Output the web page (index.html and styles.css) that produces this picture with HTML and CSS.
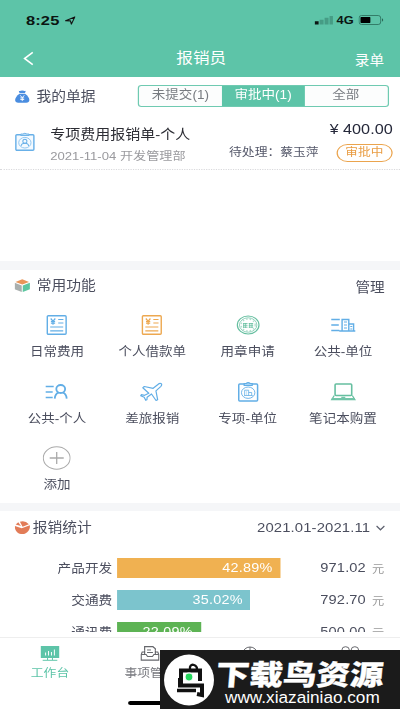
FILE: index.html
```html
<!DOCTYPE html>
<html lang="zh-CN">
<head>
<meta charset="utf-8">
<title>报销员</title>
<link rel="stylesheet" href="styles.css">
</head>
<body>
<div class="screen">
  <header class="head">
    <div class="status">
      <span class="time">8:25</span>
      <svg class="loc" viewBox="0 0 12 10" preserveAspectRatio="none"><path d="M1 5.2 10.6 1 7 9 6 5.4Z" fill="none" stroke="#111" stroke-width="1.2" stroke-linejoin="round"/></svg>
      <svg class="signal" viewBox="0 0 19 10" preserveAspectRatio="none"><path d="M0 6.5h4V10H0z" fill="#0b1512"/><path d="M5 5h4v5H5zM10 3h4v7h-4zM15 1h3.500v9H15z" fill="#469c85"/></svg>
      <span class="net">4G</span>
      <svg class="battery" viewBox="0 0 26 10" preserveAspectRatio="none"><rect x=".5" y=".5" width="22" height="9" rx="2.500" fill="none" stroke="#327c68"/><rect x="2" y="2" width="10" height="6" rx=".7" fill="#000"/><path d="M24 3.300q2 1.700 0 3.400z" fill="#1f4e41"/></svg>
    </div>
    <nav class="navbar">
      <svg class="back" viewBox="0 0 12 16" preserveAspectRatio="none"><path d="M10.500 1.500 1.500 8l9 6.500" fill="none" stroke="#fff" stroke-width="1.700"/></svg>
      <h1 class="t">报销员</h1>
      <a class="entry t">录单</a>
    </nav>
  </header>

  <section class="bills">
    <div class="bills-head">
      <svg class="sec-icon" viewBox="0 0 15 14" preserveAspectRatio="none"><path d="M4 .7q1.200.7 1.800.1 1.700-.8 3.400 0 .7.500 1.800-.1L10.200 3H4.800z" fill="#4a8de0"/><path d="M4.700 3.800h5.600C13 6 14.500 8.200 14.500 10.300c0 1.800-1.200 2.900-3 2.900h-8c-1.800 0-3-1.100-3-2.900C.5 8.200 2 6 4.700 3.800z" fill="#4a8de0"/><path d="m5.500 5.500 2 2.500 2-2.500M7.500 8v3.500M5.600 8.200h3.800M5.600 9.900h3.800" fill="none" stroke="#fff" stroke-width=".9"/></svg>
      <h2 class="t">我的单据</h2>
      <div class="segments"><span><em class="t">未提交(1)</em></span><span class="on"><em class="t">审批中(1)</em></span><span><em class="t">全部</em></span></div>
    </div>
    <div class="bill">
      <svg class="bill-icon" viewBox="0 0 20 20" preserveAspectRatio="none"><rect x="1.200" y="2.700" width="17.600" height="15.500" rx="1" fill="#f4faff" stroke="#68b0e8" stroke-width="1.400"/><path d="M6 3.500V2h2q2-1.500 4 0h2v1.500z" fill="#b9dcf6" stroke="#68b0e8" stroke-width=".9"/><ellipse cx="10" cy="10.700" rx="6" ry="5.300" fill="none" stroke="#8bc3ee" stroke-width=".9"/><circle cx="10" cy="9.300" r="2" fill="none" stroke="#68b0e8"/><path d="M6.300 14q.4-2.800 3.700-2.800t3.700 2.800" fill="none" stroke="#68b0e8"/></svg>
      <div class="bill-main">
        <div class="bill-line"><span class="bill-title t">专项费用报销单-个人</span><span class="amount t">¥ <b>400.00</b></span></div>
        <div class="bill-line sub"><span class="date t">2021-11-04 开发管理部</span><span class="pending t">待处理：蔡玉萍</span><span class="badge"><em class="t">审批中</em></span></div>
      </div>
    </div>
  </section>

  <section class="funcs">
    <div class="sec-head">
      <svg class="sec-icon" viewBox="0 0 15 14" preserveAspectRatio="none"><path d="M7.500.3 14.200 3 7.500 5.700.8 3z" fill="#e89558"/><path d="M0 4 7 6.700V13.500L0 10.700z" fill="#a9afae"/><path d="M15 4 8 6.700v6.800l7-2.800z" fill="#5cc6a0"/></svg>
      <h2 class="t">常用功能</h2><a class="manage t">管理</a>
    </div>
    <div class="grid">
      <div class="fn"><svg viewBox="0 0 28 24" preserveAspectRatio="none" class="blue"><rect x="4.600" y="2.700" width="18.800" height="18.600" rx="1" stroke-width="1.400"/><path d="m8 5.500 2.300 2.700 2.300-2.700M10.300 8v3.800M8.200 8.500h4.200M8.200 10.200h4.200M15.500 6.500h5.200M15.500 10h5.200M7.500 14h13M7.500 17.800h13" stroke-width="1.200"/></svg><span class="t">日常费用</span></div>
      <div class="fn"><svg viewBox="0 0 28 24" preserveAspectRatio="none" class="orange"><rect x="4.600" y="2.700" width="18.800" height="18.600" rx="1" stroke-width="1.400"/><path d="m8 5.500 2.300 2.700 2.300-2.700M10.300 8v3.800M8.200 8.500h4.200M8.200 10.200h4.200M15.500 6.500h5.200M15.500 10h5.200M7.500 14h13M7.500 17.800h13" stroke-width="1.200"/></svg><span class="t">个人借款单</span></div>
      <div class="fn"><svg viewBox="0 0 28 24" preserveAspectRatio="none" class="green"><ellipse cx="14" cy="12" rx="10.800" ry="9"/><ellipse cx="14" cy="12" rx="8.700" ry="7.200" stroke-width=".7"/><ellipse cx="14" cy="12" rx="7" ry="5.900" stroke-width="1.300" stroke-dasharray="1.500 2" opacity=".5"/><path d="M9 10.500h4.400M9 12.300h4.400M9 14.200h4.400M9.500 10v5M11.500 10v5M14.500 10.500H19M14.500 12.300H19M14.500 14.200H19M15.500 10v5M17.800 10v5" stroke-width=".8"/></svg><span class="t">用章申请</span></div>
      <div class="fn"><svg viewBox="0 0 28 24" preserveAspectRatio="none" class="blue"><path d="M2 6.500h8.500M2 12h7.500M2 17.500h8M10 18h16" stroke-width="1.700"/><path d="M12.800 18V6.500h6.700V18M19.500 11h4.800v7" stroke-width="1.400"/><path d="M14.700 9h3M14.700 12h3M14.700 15h3M21 13.500h2M21 16h2" stroke-width="1"/></svg><span class="t">公共-单位</span></div>
      <div class="fn"><svg viewBox="0 0 28 24" preserveAspectRatio="none" class="blue"><path d="M3 6.500h8M3 12h7M3 17.500h7" stroke-width="1.500"/><ellipse cx="18" cy="9" rx="4.400" ry="4" stroke-width="1.800"/><path d="M12 18.700q.5-5.200 4-6M24 18.700q-.5-5.200-4-6" stroke-width="1.800"/></svg><span class="t">公共-个人</span></div>
      <div class="fn"><svg viewBox="0 0 28 24" preserveAspectRatio="none" class="blue"><path d="m11 13.300-4.200 2-3.300-.6-.6 1 3.500 1.600 1.500 3 1.200-.5.200-2.500 4.400-3.300 4.500 6.500 1.600-.8-1.700-8.800 4.700-4.300c1.200-1.200 1.300-2.400.7-2.800s-2.600 0-3.700.9l-4.500 3.600-8.800-1.800-1.500 1.200z" stroke-linejoin="round" stroke-width="1.200"/></svg><span class="t">差旅报销</span></div>
      <div class="fn"><svg viewBox="0 0 28 24" preserveAspectRatio="none" class="blue"><rect x="4.600" y="4" width="18.800" height="17" rx="1" stroke-width="1.500"/><path d="M10 5.500v-2h2q2-1.800 4 0h2v2z" fill="#a9d5f6"/><ellipse cx="14" cy="12.700" rx="6.700" ry="5.700" stroke-width=".9"/><path d="M10.500 15.500v-5.300h4v5.300M14.500 12.500h3v3M10 15.500h8.500M12 12h1M12 14h1" stroke-width=".8"/></svg><span class="t">专项-单位</span></div>
      <div class="fn"><svg viewBox="0 0 28 24" preserveAspectRatio="none" class="green"><rect x="5.800" y="4" width="16.600" height="11.500" rx="1" stroke-width="1.600"/><path d="M5 15.500 2.500 19.500h23L23 15.500" stroke-width="1.300"/><path d="M2.500 18h23v1.700h-23zM12 16.800h4v2h-4z" fill="#74c6a9" stroke="none"/></svg><span class="t">笔记本购置</span></div>
      <div class="fn"><svg viewBox="0 0 28 24" preserveAspectRatio="none" class="grey"><ellipse cx="14" cy="12" rx="13.400" ry="11.200" stroke-width="1"/><path d="M7 12h14M14 6v12" stroke-width="1.300"/></svg><span class="t">添加</span></div>
    </div>
  </section>

  <section class="stats">
    <div class="sec-head stats-head">
      <svg class="sec-icon" viewBox="0 0 15 14" preserveAspectRatio="none"><path d="M.3 5.200 7 7.500 15 4.500C15.500 9.500 12 13.600 7.500 13.600S-.2 9.600.3 5.200z" fill="#e27c58"/><path d="M7.800 6 5.200.7Q10.500-.8 14 3.300zM6.200 5.300 1 3.500 3.600 1.300z" fill="#e27c58"/></svg>
      <h2 class="t">报销统计</h2><span class="range t">2021.01-2021.11</span>
      <svg class="chev" viewBox="0 0 10 6" preserveAspectRatio="none"><path d="m1 1 4 3.800L9 1" fill="none" stroke="#5d606e" stroke-width="1.200"/></svg>
    </div>
    <div class="row"><span class="name t">产品开发</span><div class="track"><div class="bar amber"><em class="t">42.89%</em></div></div><span class="val t">971.02</span><span class="unit t">元</span></div>
    <div class="row"><span class="name t">交通费</span><div class="track"><div class="bar teal"><em class="t">35.02%</em></div></div><span class="val t">792.70</span><span class="unit t">元</span></div>
    <div class="row"><span class="name t">通讯费</span><div class="track"><div class="bar leaf"><em class="t">22.09%</em></div></div><span class="val t">500.00</span><span class="unit t">元</span></div>
  </section>

  <footer class="tabs">
    <div class="tab active"><svg viewBox="0 0 20 15" preserveAspectRatio="none"><path d="M.5 0h19v12H.5z" fill="#5dc4a8"/><path d="M5.500 9.500v-3M8.500 9.500V5M11.500 9.500V6M14.500 9.500V3.500" stroke="#fff" stroke-width="1"/><path d="M7.500 12v2M12.500 12v2M2.500 14.300h15" stroke="#5dc4a8" stroke-width="1"/></svg><span class="t">工作台</span></div>
    <div class="tab"><svg viewBox="0 0 20 15" preserveAspectRatio="none" fill="none" stroke="#66676c" stroke-width="1.200"><path d="M4.500 8V.7h8.500l2.500 2V8M7 4h4M7 6.500h6M4.500 6H2L1 8.500v5.700h18V8.500L18 6h-2.500M1 8.500h5l1.500 2h5l1.500-2h5"/></svg><span class="t">事项管理</span></div>
    <div class="tab"><svg viewBox="0 0 20 15" preserveAspectRatio="none" fill="none" stroke="#66676c"><ellipse cx="10" cy="8" rx="7.500" ry="7"/><path d="M10 1v7h8"/></svg><span class="t">报表</span></div>
    <div class="tab"><svg viewBox="0 0 20 15" preserveAspectRatio="none" fill="none" stroke="#66676c"><ellipse cx="5.500" cy="4" rx="3.800" ry="3.300"/><ellipse cx="15" cy="4" rx="3.800" ry="3.300"/><path d="M1 14q1-6 5-6t5 6M11 14q1-6 4-6t5 6"/></svg><span class="t">我的</span></div>
    <i class="home"></i>
  </footer>
</div>

<aside class="mark">
  <svg class="mark-logo" viewBox="0 0 50 56"><ellipse cx="25" cy="27" rx="25" ry="25.500" fill="#fff"/><g fill="none" stroke="#111" stroke-width="4"><path d="M26 17v-3q1-3 4-2t3 4" stroke-width="2.300"/><path d="M17 31V17.500h19V28"/><path d="M16 25v7.500h22V42l-5-1"/><path d="M13 37.500h19" stroke-width="3.500"/></g><circle cx="25" cy="24" r="4" fill="#25d65c" stroke="#fff" stroke-width="1.200"/></svg>
  <div class="mark-text"><strong>下载鸟资源</strong><span>www.xiazainiao.com</span></div>
</aside>
</body>
</html>
```
FILE: styles.css
```css
* { box-sizing: border-box; }
html, body { margin: 0; padding: 0; }
body { width: 400px; height: 711px; overflow: hidden; position: relative; background: #fff; font-family: "Liberation Sans", "Noto Sans CJK SC", sans-serif; }
h1, h2 { margin: 0; font-weight: 400; }
em { font-style: normal; display: inline-block; }
svg { display: block; flex: none; }
span, a, h1, h2 { white-space: nowrap; }

/* The interface is laid out on a 328px canvas and widened to the window. */
.screen { width: 328px; height: 711px; transform: scaleX(1.2195); transform-origin: 0 0; display: flex; flex-direction: column; overflow: hidden; color: #4b4e5e; }
.t { transform: scaleY(1.1); }

.head { height: 77px; background: #5dc4a8; flex: none; }
.status { height: 39px; display: flex; align-items: center; padding: 1px 13px 0 21.300px; color: #0b1512; }
.time { font-size: 13.500px; font-weight: 700; letter-spacing: .1px; width: 30px; }
.loc { width: 9.500px; height: 9px; margin-left: 1.500px; }
.signal { width: 15.500px; height: 9.500px; margin-left: auto; }
.net { font-size: 10.500px; font-weight: 700; margin: 0 4px 0 3px; width: 14px; }
.battery { width: 21px; height: 10px; }
.navbar { height: 38px; display: grid; grid-template-columns: 1fr auto 1fr; align-items: center; padding: 0 13px 0 19px; color: #fff; }
.back { width: 9px; height: 15px; }
.navbar h1 { font-size: 13.600px; line-height: 20px; margin: 1px 4px 0 0; }
.entry { justify-self: end; font-size: 12px; }

.bills { height: 184px; flex: none; }
.bills-head { height: 36px; display: flex; align-items: center; padding: 3px 9.500px 0 12px; }
.sec-icon { width: 12.500px; height: 13.500px; }
h2 { font-size: 12.100px; line-height: 18px; margin-left: 5.400px; }
.segments { width: 205.500px; height: 22px; margin: 0 0 2px auto; display: grid; grid-template-columns: 1fr 1fr 1fr; border: 1px solid #6fcab1; border-radius: 3px; background: #fcfdfd; overflow: hidden; color: #777b80; }
.segments span { font-size: 11.100px; line-height: 19px; text-align: center; }
.segments .on { background: #5dc4a8; color: #fff; }
.bill { height: 57px; display: flex; align-items: center; padding: 2px 6px 0 12px; border-bottom: 1px dotted #d9d9dc; }
.bill-icon { width: 16.800px; height: 20px; }
.bill-main { flex: 1; margin-left: 12.400px; }
.bill-line { height: 23px; display: flex; align-items: center; }
.bill-title { font-size: 12.300px; color: #2c2d34; padding-top: 1px; }
.amount { margin-left: auto; font-size: 13px; color: #25283a; padding-bottom: 5px; }
.amount b { font-weight: 400; font-size: 13.300px; }
.sub { height: 20px; }
.date { font-size: 10.750px; color: #9a9a9e; padding-top: 2px; }
.pending { font-size: 10.500px; color: #55586a; margin-left: auto; width: 87.700px; padding-bottom: 4px; }
.badge { width: 46.500px; height: 18px; margin-bottom: 1px; border: 1px solid #eba44d; border-radius: 9px; color: #e99c42; text-align: center; font-size: 10.400px; line-height: 15px; }

.funcs, .stats { border-top: 9px solid #f5f6f8; flex: none; }
.funcs { height: 242px; }
.sec-head { height: 31px; display: flex; align-items: center; padding: 1px 12.500px 0 12.300px; }
.manage { margin: -1px 0 0 auto; font-size: 12px; }
.grid { display: grid; grid-template-columns: repeat(4, 1fr); grid-auto-rows: 66.500px; padding: 12px 7.700px 0; }
.fn { display: flex; flex-direction: column; align-items: center; font-size: 11.100px; }
.fn svg { width: 23px; height: 24px; fill: none; stroke-width: 1.200; }
.fn span { line-height: 18px; margin-top: 6px; }
.blue { stroke: #62aee6; }
.orange { stroke: #eda850; }
.green { stroke: #66bfa0; }
.grey { stroke: #aaa; }

.stats { height: 129px; border-top-width: 8px; overflow: hidden; }
.stats-head { height: 31px; padding-top: 2px; }
.stats-head h2 { margin-left: 2px; }
.range { margin-left: auto; font-size: 12.200px; letter-spacing: .1px; }
.chev { width: 8px; height: 6px; margin-left: 4px; }
.row { height: 20px; margin-top: 12px; display: flex; align-items: center; padding-right: 13px; }
.stats-head + .row { margin-top: 16px; }
.name { width: 96px; padding: 0 4px 1px 0; text-align: right; font-size: 11.200px; }
.track { flex: 1; height: 20px; }
.bar { height: 20px; padding-right: 6px; text-align: right; color: #fff; font-size: 11.800px; line-height: 20px; letter-spacing: .2px; }
.amber { width: 133.500px; background: #f0b151; }
.teal { width: 109px; background: #7cc4cd; }
.leaf { width: 69px; background: #5db354; padding-right: 7px; }
.val { font-size: 12px; letter-spacing: .1px; }
.unit { font-size: 10px; color: #999; margin-left: 5px; }

.tabs { height: 74px; margin-top: 5px; border-top: 1px solid #eee; background: #fff; display: grid; grid-template-columns: repeat(4, 1fr); position: relative; flex: none; }
.tab { display: flex; flex-direction: column; align-items: center; padding-top: 8px; font-size: 10.500px; color: #77787e; }
.tab svg { width: 16px; height: 15px; }
.tab span { margin-top: 4px; line-height: 16px; }
.active { color: #5dc4a8; }
.home { position: absolute; left: 105px; top: 63px; width: 118px; height: 3.500px; border-radius: 2px; background: #000; }

.mark { position: absolute; left: 160px; top: 650px; width: 240px; height: 59px; background: #1b1b1b; display: flex; padding: 3px 0 0 4px; overflow: hidden; }
.mark-logo { width: 50px; height: 56px; }
.mark-text { display: flex; flex-direction: column; color: #fff; }
.mark-text strong { font-size: 33.500px; line-height: 27px; font-weight: 900; height: 27px; margin: 9px 0 0 2px; transform: scaleY(.84) skewX(-4deg); -webkit-text-stroke: .4px #fff; }
.mark-text span { font-size: 17.200px; line-height: 18px; margin: -1px 0 0 11px; }
```
